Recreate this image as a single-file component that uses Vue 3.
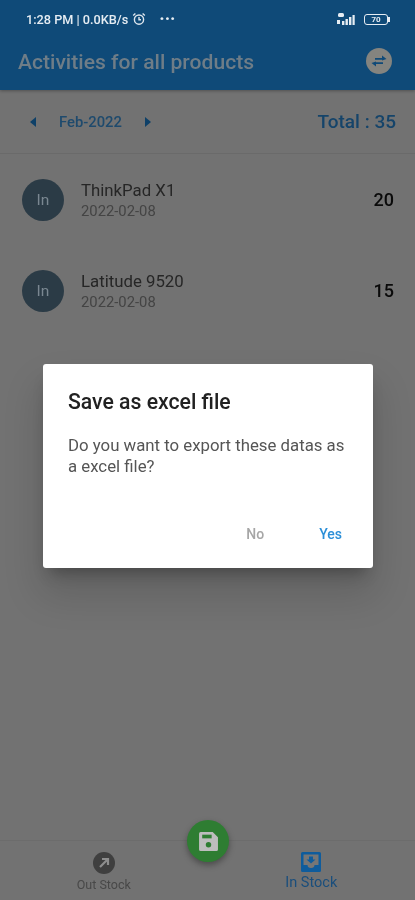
<script setup>
const rows = [
  { name: 'ThinkPad X1', date: '2022-02-08', qty: 20 },
  { name: 'Latitude 9520', date: '2022-02-08', qty: 15 },
]
</script>

<template>
  <div class="page">
    <header class="appbar">
      <div class="status">
        <div class="status-left">
          <span>1:28 PM | 0.0KB/s</span>
          <svg class="alarm" width="14" height="14" viewBox="0 0 14 14" fill="none" stroke="#dfe7ee" stroke-width="1.4">
            <circle cx="7" cy="7.6" r="4.6" />
            <path d="M7 5v2.8h2M1.2 3.4 3.4 1.400M12.8 3.4 10.6 1.400" />
          </svg>
          <span class="dots">···</span>
        </div>
        <div class="status-right">
          <svg width="20" height="14" viewBox="0 0 20 14" fill="#e6edf3">
            <rect x="1" y="8" width="3" height="4" />
            <rect x="6" y="9" width="2.4" height="4" />
            <rect x="9.500" y="7" width="2.400" height="6" />
            <rect x="13" y="5" width="2.400" height="8" />
            <rect x="16.500" y="3" width="2.200" height="10" />
            <rect x="2" y="1" width="6" height="4" rx="1.500" />
          </svg>
          <div class="battery"><span>70</span></div>
        </div>
      </div>
      <div class="toolbar">
        <h1>Activities for all products</h1>
        <span class="swap">
          <svg width="20" height="20" viewBox="0 0 20 20" fill="#0f4a78">
            <path d="M6 7h7V4.500L17.500 8 13 9.500V8.800H6z" />
            <path d="M14 11.200H7V10.500L2.500 12 7 15.500V13H14z" />
          </svg>
        </span>
      </div>
    </header>

    <section class="summary">
      <div class="month">
        <span class="tri left"></span>
        <span class="month-label">Feb-2022</span>
        <span class="tri right"></span>
      </div>
      <div class="total">Total : 35</div>
    </section>

    <main class="list">
      <div v-for="row in rows" :key="row.name" class="row">
        <div class="avatar">In</div>
        <div class="info">
          <div class="name">{{ row.name }}</div>
          <div class="date">{{ row.date }}</div>
        </div>
        <div class="qty">{{ row.qty }}</div>
      </div>
    </main>

    <nav class="bottom">
      <div class="tab out">
        <svg width="22" height="22" viewBox="0 0 22 22">
          <circle cx="11" cy="11" r="11" fill="#3f3f3f" />
          <path d="M7 15 14.500 7.500M9 7h6v6" fill="none" stroke="#8d8d8d" stroke-width="2.200" />
        </svg>
        <span>Out Stock</span>
      </div>
      <div class="tab in">
        <svg width="20" height="20" viewBox="0 0 20 20">
          <path fill="#0f5c9c" d="M0 1.500A1.500 1.500 0 0 1 1.500 0h17A1.500 1.500 0 0 1 20 1.500v17a1.500 1.500 0 0 1-1.500 1.500h-17A1.500 1.500 0 0 1 0 18.500z" />
          <path fill="#767676" d="M2.500 2.500h15v10.500h-4a3.500 3 0 0 1-7 0h-4z" />
          <path fill="#0f5c9c" d="M8 4.500h4v3h2.500L10 11.500 5.500 7.500H8z" />
        </svg>
        <span>In Stock</span>
      </div>
    </nav>

    <button class="fab" aria-label="Save">
      <svg width="21" height="21" viewBox="0 0 20 20">
        <path fill="#bdbdbd" d="M2.500 1H14l5 5v11.500a1.500 1.500 0 0 1-1.500 1.500h-15A1.500 1.500 0 0 1 1 17.500v-15A1.500 1.500 0 0 1 2.500 1z" />
        <rect x="4" y="3.500" width="9" height="3.500" fill="#2e7d32" />
        <circle cx="10" cy="13" r="2.600" fill="#2e7d32" />
      </svg>
    </button>

    <div class="dialog">
      <h2>Save as excel file</h2>
      <p>Do you want to export these datas as a excel file?</p>
      <div class="actions">
        <span class="no">No</span>
        <span class="yes">Yes</span>
      </div>
    </div>
  </div>
</template>

<style scoped>
.page {
  position: relative;
  width: 415px;
  height: 900px;
  overflow: hidden;
  display: flex;
  flex-direction: column;
  background: #727272;
  font-family: Roboto, "Liberation Sans", sans-serif;
  filter: blur(0.35px);
}
.appbar {
  height: 90px;
  flex: none;
  background: #0f4a78;
  box-shadow: 0 1px 3px rgba(0, 0, 0, 0.3);
  padding: 0 23px 0 18px;
  box-sizing: border-box;
}
.status {
  height: 38px;
  display: flex;
  align-items: center;
  justify-content: space-between;
  padding-left: 8px;
  color: #e6edf3;
  font-size: 12.700px;
  font-weight: 500;
}
.status-left {
  display: flex;
  align-items: center;
  gap: 4px;
}
.dots {
  margin-left: 9px;
  font-size: 18px;
  font-weight: 700;
  line-height: 12px;
}
.status-right {
  display: flex;
  align-items: center;
  gap: 8px;
  margin-right: 4px;
}
.battery {
  position: relative;
  width: 24px;
  height: 11px;
  border: 1px solid #e6edf3;
  border-radius: 3px;
  display: flex;
  align-items: center;
  justify-content: center;
  font-size: 8px;
  font-weight: 700;
  color: #e6edf3;
  box-sizing: border-box;
}
.battery::after {
  content: "";
  position: absolute;
  right: -3px;
  top: 2px;
  width: 2px;
  height: 5px;
  background: #e6edf3;
}
.toolbar {
  height: 46px;
  display: flex;
  align-items: center;
  justify-content: space-between;
}
h1 {
  margin: 0;
  font-size: 21.100px;
  font-weight: 500;
  color: #6f7d87;
}
.swap {
  width: 26px;
  height: 26px;
  border-radius: 50%;
  background: #84847f;
  display: flex;
  align-items: center;
  justify-content: center;
}
.summary {
  height: 64px;
  flex: none;
  display: flex;
  align-items: center;
  justify-content: space-between;
  padding: 0 19px 0 30px;
  border-bottom: 1px solid #6a6a6a;
  box-sizing: border-box;
}
.month {
  display: flex;
  align-items: center;
  gap: 23px;
}
.month-label {
  font-size: 14.800px;
  font-weight: 500;
  color: #1e4a6d;
}
.tri {
  width: 0;
  height: 0;
  border-top: 5px solid transparent;
  border-bottom: 5px solid transparent;
}
.tri.left {
  border-right: 6px solid #0e4068;
}
.tri.right {
  border-left: 6px solid #0e4068;
}
.total {
  font-size: 19px;
  font-weight: 500;
  color: #15446a;
}
.list {
  flex: 1;
}
.row {
  height: 91px;
  display: flex;
  align-items: center;
  padding: 0 21px 0 22px;
}
.avatar {
  width: 42px;
  height: 42px;
  border-radius: 50%;
  background: #2b3b46;
  color: #7a8791;
  font-size: 15.500px;
  display: flex;
  align-items: center;
  justify-content: center;
  flex: none;
}
.info {
  margin-left: 17px;
  flex: 1;
}
.name {
  font-size: 16.800px;
  line-height: 22px;
  color: #262626;
}
.date {
  font-size: 14.800px;
  line-height: 20px;
  color: #444;
}
.qty {
  font-size: 18px;
  font-weight: 500;
  color: #0a0a0a;
}
.bottom {
  height: 60px;
  flex: none;
  display: flex;
  border-top: 1px solid #6c6c6c;
  box-sizing: border-box;
}
.tab {
  flex: 1;
  display: flex;
  flex-direction: column;
  align-items: center;
  padding-top: 11px;
  box-sizing: border-box;
}
.tab.out {
  font-size: 12.500px;
  color: #484848;
  gap: 3px;
}
.tab.in {
  font-size: 14.500px;
  color: #1a4e7c;
  gap: 2px;
}
.fab {
  position: absolute;
  left: 187px;
  top: 820px;
  width: 42px;
  height: 42px;
  padding: 0;
  border: 0;
  border-radius: 50%;
  background: #2e7d32;
  display: flex;
  align-items: center;
  justify-content: center;
  box-shadow: 0 3px 6px rgba(0, 0, 0, 0.35);
}
.dialog {
  position: absolute;
  left: 43px;
  top: 364px;
  width: 330px;
  height: 204px;
  box-sizing: border-box;
  padding: 25px 25px 26px;
  background: #fff;
  border-radius: 3px;
  box-shadow: 0 11px 15px -7px rgba(0, 0, 0, 0.3), 0 24px 38px 3px rgba(0, 0, 0, 0.14);
  display: flex;
  flex-direction: column;
}
h2 {
  margin: 0;
  font-size: 21.200px;
  line-height: 26px;
  font-weight: 500;
  color: #212121;
}
p {
  margin: 20px 0 0;
  font-size: 16.800px;
  line-height: 21px;
  color: #555;
}
.actions {
  margin-top: auto;
  display: flex;
  justify-content: flex-end;
  gap: 55px;
  padding-right: 6px;
  font-size: 14px;
  font-weight: 500;
}
.no {
  color: #a6a6a6;
}
.yes {
  color: #2b8fd8;
}
</style>
